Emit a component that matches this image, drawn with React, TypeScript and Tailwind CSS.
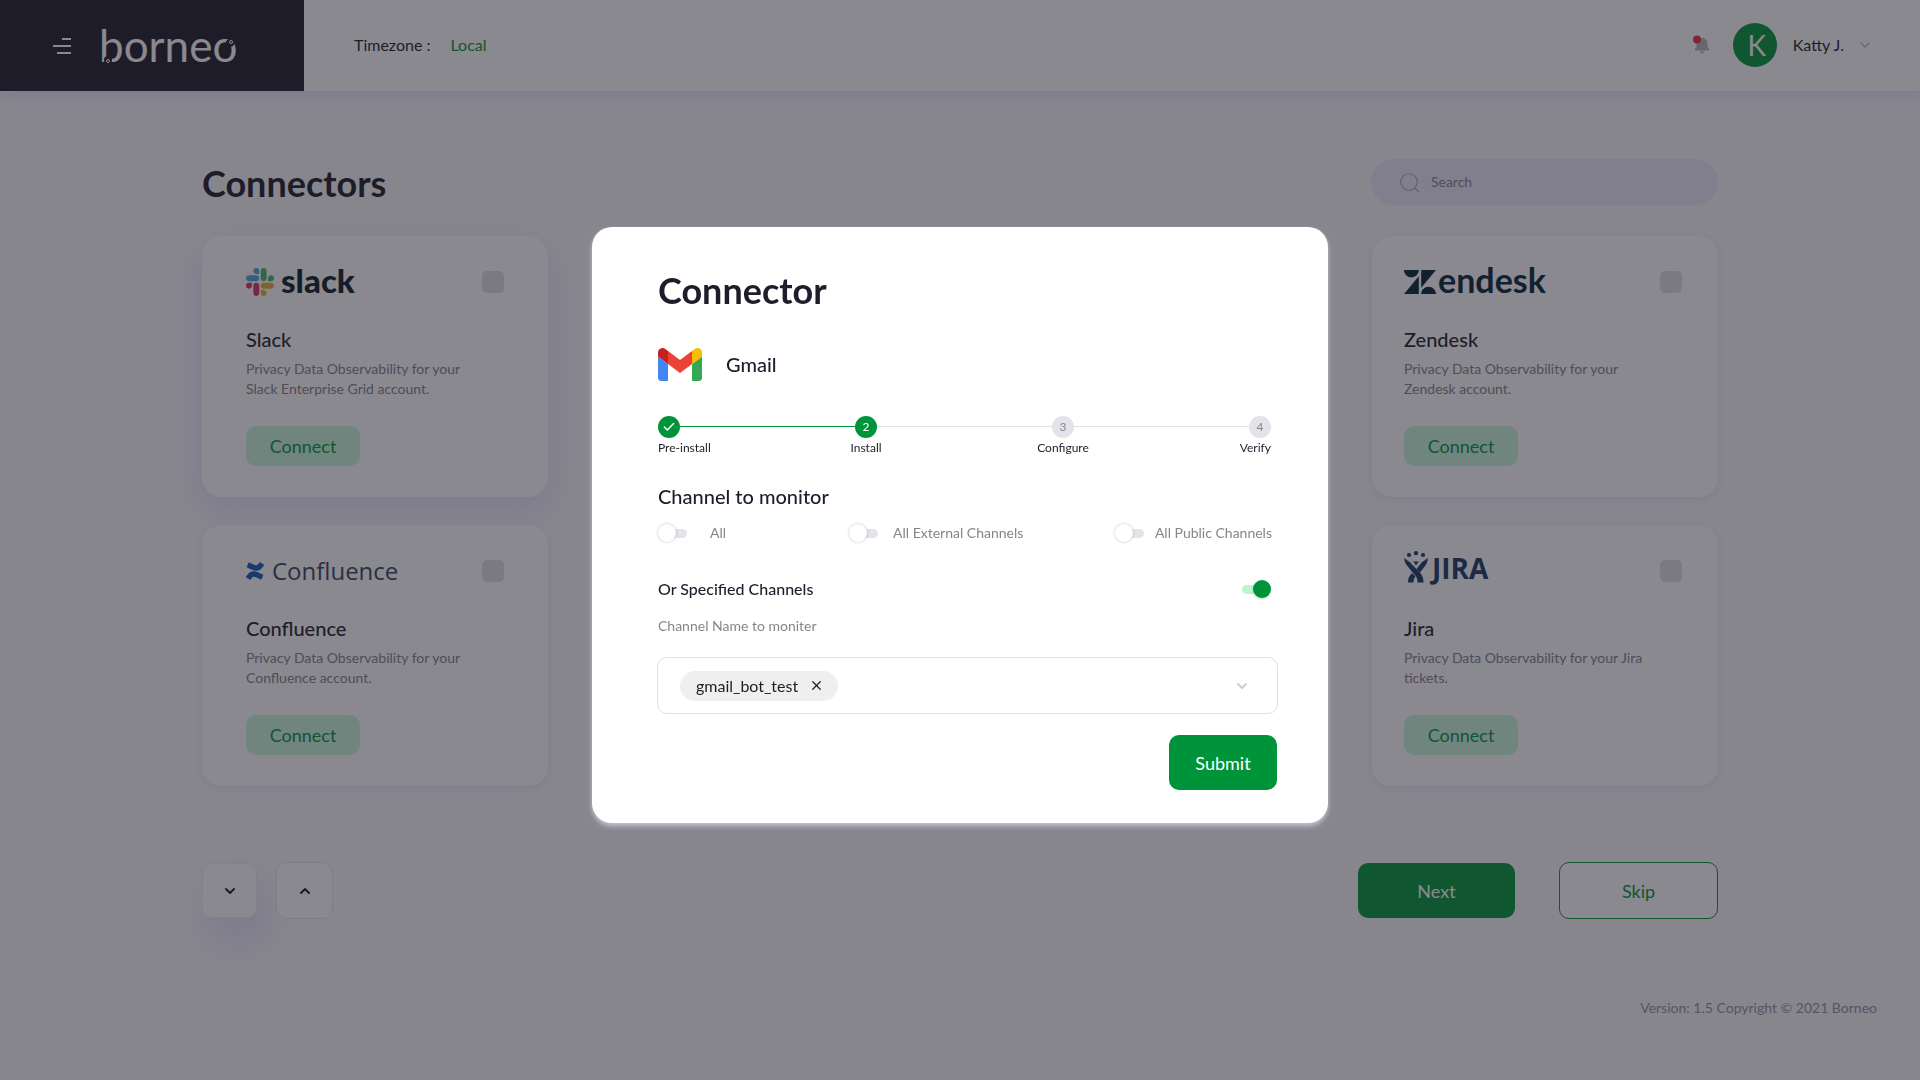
import type { ReactNode } from 'react';
import { ChevronDown, ChevronUp, X, Check } from 'lucide-react';
import { SiConfluence } from 'react-icons/si';

function BorneoLogo() {
  return (
    <svg width="150" height="60" viewBox="0 0 150 60" role="img" aria-label="borneo">
      <text x="0" y="46" fill="#ffffff" fontSize="44" fontFamily="Lato, sans-serif">borneo</text>
      <circle cx="9" cy="44" r="4" fill="#1f1d28" />
      <circle cx="9" cy="45" r="1.500" fill="none" stroke="#ffffff" />
      <circle cx="131" cy="27" r="4" fill="#1f1d28" />
      <circle cx="132" cy="26" r="1.500" fill="none" stroke="#ffffff" />
    </svg>
  );
}

function SlackLogo() {
  return (
    <span className="flex items-center gap-[7px]">
      <svg width="28" height="28" viewBox="0 0 122.8 122.8">
        <path fill="#D9325F" d="M25.8 77.6c0 7.1-5.8 12.9-12.9 12.9S0 84.7 0 77.6s5.8-12.9 12.9-12.9h12.9v12.9zm6.500 0c0-7.1 5.8-12.9 12.9-12.9s12.9 5.8 12.9 12.9v32.3c0 7.1-5.8 12.9-12.9 12.9s-12.9-5.8-12.9-12.9V77.6z" />
        <path fill="#4DA8D8" d="M45.2 25.8c-7.1 0-12.9-5.8-12.9-12.9S38.1 0 45.2 0s12.9 5.8 12.9 12.9v12.9H45.2zm0 6.500c7.1 0 12.9 5.8 12.9 12.9s-5.8 12.9-12.9 12.9H12.9C5.8 58.1 0 52.3 0 45.2s5.8-12.9 12.9-12.9h32.3z" />
        <path fill="#45B477" d="M97 45.2c0-7.1 5.8-12.9 12.9-12.9s12.9 5.8 12.9 12.9-5.8 12.9-12.9 12.9H97V45.2zm-6.500 0c0 7.1-5.8 12.9-12.9 12.9s-12.9-5.8-12.9-12.9V12.9C64.7 5.8 70.5 0 77.6 0s12.9 5.8 12.9 12.9v32.3z" />
        <path fill="#E8AE3A" d="M77.6 97c7.1 0 12.9 5.8 12.9 12.9s-5.8 12.9-12.9 12.9-12.9-5.8-12.9-12.9V97h12.9zm0-6.500c-7.1 0-12.9-5.8-12.9-12.9s5.8-12.9 12.9-12.9h32.3c7.1 0 12.9 5.8 12.9 12.9s-5.8 12.9-12.9 12.9H77.6z" />
      </svg>
      <span className="text-[33px] leading-8 font-black text-[#0b1f2a] pb-1">slack</span>
    </span>
  );
}

function ConfluenceLogo() {
  return (
    <span className="flex items-center gap-2">
      <SiConfluence className="w-[18px] h-[18px] text-[#1558bc]" />
      <span className="text-2xl font-['Open_Sans',sans-serif] text-[#344563]">Confluence</span>
    </span>
  );
}

function ZendeskLogo() {
  return (
    <span className="flex items-center gap-[2px]">
      <svg width="32" height="24" viewBox="0 2.9 24 18.2" preserveAspectRatio="none" fill="#03263a">
        <path d="M12.914 2.904V16.29L24 2.905H12.914zM0 2.906C0 5.966 2.483 8.45 5.543 8.45s5.542-2.484 5.543-5.544H0zm11.086 4.807L0 21.096h11.086V7.713zm7.37 7.84c-3.063 0-5.542 2.48-5.542 5.543H24c0-3.060-2.480-5.543-5.543-5.543z" />
      </svg>
      <span className="text-[34px] leading-8 font-bold text-[#03263a] pb-1">endesk</span>
    </span>
  );
}

function JiraLogo() {
  return (
    <span className="flex items-center gap-1 pb-2">
      <svg width="24" height="32" viewBox="0 0 24 32" fill="#1c3a66">
        <circle cx="5" cy="4" r="2.100" />
        <circle cx="12" cy="2.200" r="2.100" />
        <circle cx="19" cy="4" r="2.100" />
        <path d="M0 7c3 2.500 5.500 3 8 6.500L14.500 20c3.500 3.500 5 6.500 5 11.500h-6c.5-4-1.500-6.500-4.500-9.500L5 17C2 13.500 .3 11 0 7z" />
        <path d="M24 7c-3 2.500-5.500 3-8 6.500l-3.500 4.500 3.500 3.500 3.500-4.500C22 14 23.700 11 24 7z" />
        <path d="M8 22l3.500 3.500c-1.500 1.700-2 3.500-2 6H4c0-4 1-6.500 4-9.500z" />
        <path d="M9 10c2 .8 4 .8 6 0l-3 4.500z" />
      </svg>
      <span className="pt-[2px] text-[28px] leading-8 font-bold font-['Open_Sans',sans-serif] text-[#1c3a66]">JIRA</span>
    </span>
  );
}

function GmailLogo() {
  return (
    <svg width="44" height="33" viewBox="52 42 88 66">
      <path fill="#4285f4" d="M58 108h14V74L52 59v43c0 3.320 2.690 6 6 6" />
      <path fill="#34a853" d="M120 108h14c3.320 0 6-2.690 6-6V59l-20 15" />
      <path fill="#fbbc04" d="M120 48v26l20-15v-8c0-7.420-8.470-11.650-14.400-7.200" />
      <path fill="#ea4335" d="M72 74V48l24 18 24-18v26L96 92" />
      <path fill="#c5221f" d="M52 51v8l20 15V48l-5.600-4.200c-5.940-4.450-14.400-.220-14.400 7.200" />
    </svg>
  );
}

type ConnectorCardProps = {
  name: string;
  text: string;
  logo: ReactNode;
  className: string;
};

function ConnectorCard({ name, text, logo, className }: ConnectorCardProps) {
  return (
    <article className={`h-[261px] rounded-[20px] bg-white pt-[30px] ${className}`}>
      <div className="flex h-8 items-center justify-between">
        {logo}
        <input type="checkbox" aria-label={`Select ${name}`} className="appearance-none w-[22px] h-[22px] rounded-[5px] bg-[#dfdfe3]" />
      </div>
      <h2 className="mt-[27px] text-xl leading-7 font-medium text-[#1f1d2b]">{name}</h2>
      <p className="mt-[6px] max-w-[244px] text-sm leading-5 text-[#82828d]">{text}</p>
      <button type="button" className="mt-[27px] h-10 w-[114px] rounded-[10px] bg-[#c8f7dc] text-lg text-[#00943a]">
        Connect
      </button>
    </article>
  );
}

const toggleClass =
  "appearance-none relative shrink-0 w-[29px] h-[18px] before:absolute before:right-0 before:top-[5px] before:h-[9px] before:w-[22px] before:rounded-full before:bg-[#e4e3e9] after:absolute after:left-0 after:top-0 after:size-[18px] after:rounded-full after:bg-white after:shadow-[0_0_3px_rgba(0,0,0,0.25)] checked:before:left-0 checked:before:bg-[#baf5d0] checked:after:left-auto checked:after:right-0 checked:after:bg-[#00943a] checked:after:shadow-[0_1px_2px_rgba(0,148,58,0.3)]";

function Toggle({ id }: { id: string }) {
  return <input type="checkbox" id={id} className={toggleClass} />;
}

function Stepper() {
  return (
    <ol className="mr-[7px] flex h-10 text-xs leading-4 text-[#1f1d2b]">
      <li className="flex w-[22px] flex-col items-start gap-[2px] whitespace-nowrap">
        <span className="flex size-[22px] shrink-0 items-center justify-center rounded-full bg-[#00943a] text-white">
          <Check size={14} strokeWidth={2.5} />
        </span>
        Pre-install
      </li>
      <li aria-hidden="true" className="mt-[10px] h-px flex-1 bg-[#00943a]" />
      <li className="flex w-[22px] flex-col items-center gap-[2px] whitespace-nowrap">
        <span className="flex size-[22px] shrink-0 items-center justify-center rounded-full bg-[#00943a] text-white">2</span>
        Install
      </li>
      <li aria-hidden="true" className="mt-[10px] h-px flex-1 bg-[#e1e1e3]" />
      <li className="flex w-[22px] flex-col items-center gap-[2px] whitespace-nowrap">
        <span className="flex size-[22px] shrink-0 items-center justify-center rounded-full bg-[#e4e3e9] text-[#85858d]">3</span>
        Configure
      </li>
      <li aria-hidden="true" className="mt-[10px] h-px flex-1 bg-[#e1e1e3]" />
      <li className="flex w-[22px] flex-col items-end gap-[2px] whitespace-nowrap">
        <span className="flex size-[22px] shrink-0 items-center justify-center rounded-full bg-[#e4e3e9] text-[#85858d]">4</span>
        Verify
      </li>
    </ol>
  );
}

function ConnectorDialog() {
  return (
    <div className="fixed inset-0 flex items-start justify-center bg-[#1f1d28]/52 pt-[227px]">
      <div
        role="dialog"
        aria-modal="true"
        aria-labelledby="dialog-title"
        className="w-[736px] rounded-[20px] bg-white pt-[41px] pr-[50px] pb-[33px] pl-[66px] shadow-[0_3px_5px_rgba(225,222,250,0.7)]"
      >
        <h2 id="dialog-title" className="text-4xl leading-[44px] font-bold text-[#1f1d2b]">Connector</h2>
        <div className="mt-9 flex items-center gap-6">
          <GmailLogo />
          <span className="pb-[2px] text-xl leading-7 font-medium text-[#1f1d2b]">Gmail</span>
        </div>
        <div className="mt-[35px]">
          <Stepper />
        </div>

        <h3 className="mt-[26px] text-xl leading-7 font-medium text-[#1f1d2b]">Channel to monitor</h3>
        <div className="mt-[13px] mr-[6px] flex h-5 items-center text-sm text-[#85858d]">
          <Toggle id="all" />
          <label htmlFor="all" className="ml-[23px] w-[139px]">All</label>
          <Toggle id="external" />
          <label htmlFor="external" className="ml-[15px]">All External Channels</label>
          <span className="ml-auto flex items-center gap-[11px]">
            <Toggle id="public" />
            <label htmlFor="public">All Public Channels</label>
          </span>
        </div>

        <div className="mt-[34px] mr-[7px] flex h-6 items-center justify-between">
          <label htmlFor="specified" className="text-base font-medium text-[#1f1d2b]">Or Specified Channels</label>
          <input type="checkbox" id="specified" defaultChecked className={toggleClass} />
        </div>
        <label htmlFor="channel" className="mt-[15px] block text-sm leading-5 text-[#85858d]">Channel Name to moniter</label>
        <div className="mt-[21px] -ml-px flex h-[57px] items-center rounded-[10px] border border-[#e1e1e3] pr-[27px] pl-[22px]">
          <span className="flex h-[30px] items-center gap-[11px] rounded-full bg-[#efefef] pr-[14px] pl-4 text-base text-[#1f1d2b]">
            gmail_bot_test
            <button type="button" aria-label="Remove gmail_bot_test">
              <X size={15} strokeWidth={2} />
            </button>
          </span>
          <input id="channel" type="text" className="min-w-0 flex-1 px-3 outline-none" />
          <button type="button" aria-label="Show channels" className="text-[#cfcfd2]">
            <ChevronDown size={16} strokeWidth={3} />
          </button>
        </div>
        <div className="mt-[21px] mr-px flex justify-end">
          <button type="button" className="h-[55px] w-[108px] rounded-[10px] bg-[#00943a] text-lg text-white">Submit</button>
        </div>
      </div>
    </div>
  );
}

export default function App() {
  return (
    <div className="flex min-h-screen flex-col bg-[#f9f8fb] font-[Lato,sans-serif] text-[#1f1d2b]">
      <header className="flex h-[91px] items-center bg-white shadow-[0_6px_12px_rgba(226,224,252,0.8)]">
        <div className="flex h-full w-[304px] items-center bg-[#1f1d28] pl-[53px]">
          <button type="button" aria-label="Menu" className="flex w-[18px] flex-col items-end gap-[5px]">
            <span className="h-[2px] w-[9px] bg-white" />
            <span className="h-[2px] w-[18px] bg-white" />
            <span className="h-[2px] w-[14px] bg-white" />
          </button>
          <a href="#home" className="ml-7">
            <BorneoLogo />
          </a>
        </div>
        <div className="ml-[50px] flex items-center gap-5 pb-[2px] text-base">
          <span>Timezone :</span>
          <a href="#timezone" className="text-[#00943a]">Local</a>
        </div>
        <div className="mr-[47px] ml-auto flex items-center pb-[2px]">
          <button type="button" aria-label="Notifications">
            <svg width="16" height="20" viewBox="0 0 16 20">
              <path fill="#b4b4bf" d="M9 3c3.500 0 5.500 2.500 5.500 5.800v3L16 14v1.500H2V14l1.500-2.200v-3C3.500 5.500 5.500 3 9 3zM6.500 16.500h5c-.5 1.300-1.300 2-2.500 2s-2-.7-2.500-2z" />
              <circle cx="4" cy="4.500" r="4" fill="#e5304f" />
            </svg>
          </button>
          <span className="ml-6 flex size-11 items-center justify-center rounded-full bg-[#00943a] pl-1 text-[28px] text-white">K</span>
          <span className="ml-4 text-base">Katty J.</span>
          <button type="button" aria-label="Account menu" className="ml-[13px] text-[#b9b9c0]">
            <ChevronDown size={16} strokeWidth={2} />
          </button>
        </div>
      </header>

      <main className="mx-auto w-full max-w-[1516px]">
        <div className="mt-[68px] flex items-start justify-between">
          <h1 className="text-4xl leading-[48px] font-bold">Connectors</h1>
          <label className="flex h-[46px] w-[347px] items-center gap-3 rounded-full bg-[#edebfb] pl-[29px]">
            <svg width="21" height="21" viewBox="0 0 21 21" fill="none" stroke="#a9a9b4" strokeWidth="1.300" strokeLinecap="round">
              <circle cx="10" cy="10" r="9.200" />
              <path d="M16.500 17l4 3.500" />
            </svg>
            <input type="search" aria-label="Search" placeholder="Search" className="w-full text-sm outline-none placeholder:text-[#82828d]" />
          </label>
        </div>

        <div className="mt-[29px] grid grid-cols-4 gap-x-11 gap-y-7">
          <ConnectorCard
            name="Slack"
            text="Privacy Data Observability for your Slack Enterprise Grid account."
            logo={<SlackLogo />}
            className="px-11 shadow-[0_12px_36px_rgba(224,222,252,1)]"
          />
          <ConnectorCard
            name="Zendesk"
            text="Privacy Data Observability for your Zendesk account."
            logo={<ZendeskLogo />}
            className="col-start-4 pr-9 pl-8 shadow-[0_2px_8px_rgba(226,224,252,0.8)]"
          />
          <ConnectorCard
            name="Confluence"
            text="Privacy Data Observability for your Confluence account."
            logo={<ConfluenceLogo />}
            className="px-11 shadow-[0_2px_8px_rgba(226,224,252,0.8)]"
          />
          <ConnectorCard
            name="Jira"
            text="Privacy Data Observability for your Jira tickets."
            logo={<JiraLogo />}
            className="col-start-4 pr-9 pl-8 shadow-[0_2px_8px_rgba(226,224,252,0.8)]"
          />
        </div>

        <div className="mt-[76px] flex items-center">
          <button type="button" aria-label="Next row" className="flex size-[55px] items-center justify-center rounded-[10px] border border-[#eeedf2] bg-white shadow-[8px_22px_40px_rgba(224,222,252,1)]">
            <ChevronDown size={16} strokeWidth={3} />
          </button>
          <button type="button" aria-label="Previous row" className="ml-[19px] flex size-[57px] items-center justify-center rounded-[10px] border border-[#e6e5ec] bg-white">
            <ChevronUp size={16} strokeWidth={3} />
          </button>
          <button type="button" className="ml-auto h-[55px] w-[157px] rounded-[10px] bg-[#00943a] text-lg text-white">Next</button>
          <button type="button" className="ml-11 h-[57px] w-[159px] rounded-[10px] border border-[#00943a] bg-white text-lg text-[#00943a]">Skip</button>
        </div>
      </main>

      <footer className="mt-auto mr-[43px] mb-[62px] text-right text-sm leading-5 text-[#92929d]">
        Version: 1.5 Copyright © 2021 Borneo
      </footer>

      <ConnectorDialog />
    </div>
  );
}
